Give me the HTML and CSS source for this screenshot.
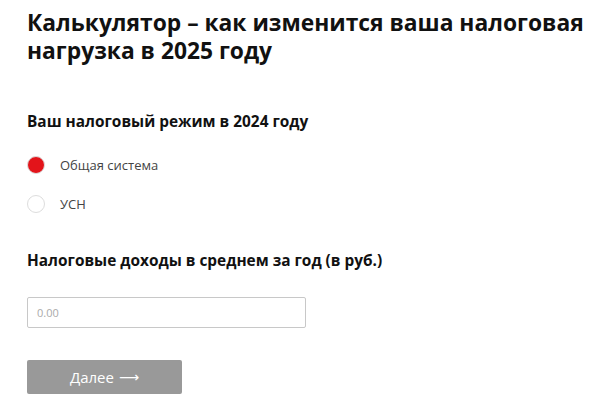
FILE: index.html
```html
<!DOCTYPE html>
<html lang="ru">
<head>
	<meta charset="UTF-8">
	<title>Калькулятор</title>
<link rel="stylesheet" href="styles.css">
</head>
<body>
	<div class="calc">
		<h1 class="title">Калькулятор – как изменится ваша налоговая нагрузка в 2025 году</h1>
		<h2 class="label">Ваш налоговый режим в 2024 году</h2>
		<div class="radios">
			<label class="radio on"><span class="dot"></span>Общая система</label>
			<label class="radio"><span class="dot"></span>УСН</label>
		</div>
		<h2 class="label">Налоговые доходы в среднем за год (в руб.)</h2>
		<input class="field" type="text" placeholder="0.00">
		<div class="btn">Далее <span class="arr">⟶</span></div>
	</div>
</body>
</html>
```
FILE: styles.css
```css
body{
	margin: 0;
	background: #fff;
	font-family: "Open Sans", "Noto Sans", sans-serif;
	color: #111;
}
.calc{
	padding: 9px 27px 0;
	display: flex;
	flex-direction: column;
	align-items: flex-start;
}
.title{
	margin: 0;
	font-size: 22.8px;
	line-height: 28px;
	font-weight: 700;
	width: 570px;
}
.label{
	margin: 47px 0 0;
	font-size: 15.4px;
	line-height: 20px;
	font-weight: 700;
}
.radios{
	display: flex;
	flex-direction: column;
	gap: 19px;
	margin-top: 23px;
}
.radio{
	display: flex;
	align-items: center;
	gap: 15px;
	font-size: 13px;
	color: #444;
	height: 20px;
}
.dot{
	width: 16px;
	height: 16px;
	border: 1px solid #ddd;
	border-radius: 50%;
}
.on .dot{
	background: #e3141a;
	box-shadow: 0 0 0 1px #fff;
}
.radios + .label{
	margin-top: 37px;
}
.field{
	margin-top: 26px;
	width: 279px;
	height: 31px;
	box-sizing: border-box;
	border: 1px solid #c8c8c8;
	border-radius: 2px;
	padding: 0 9px;
	font-family: inherit;
	font-size: 11px;
}
.field::placeholder{
	color: #aaa;
}
.btn{
	margin-top: 32px;
	width: 155px;
	height: 34px;
	background: #999;
	border-radius: 2px;
	color: #fff;
	font-size: 15px;
	font-weight: 500;
	display: flex;
	align-items: center;
	justify-content: center;
	gap: 5px;
}
.arr{
	font-family: "DejaVu Sans", sans-serif;
	font-size: 14px;
}
```
